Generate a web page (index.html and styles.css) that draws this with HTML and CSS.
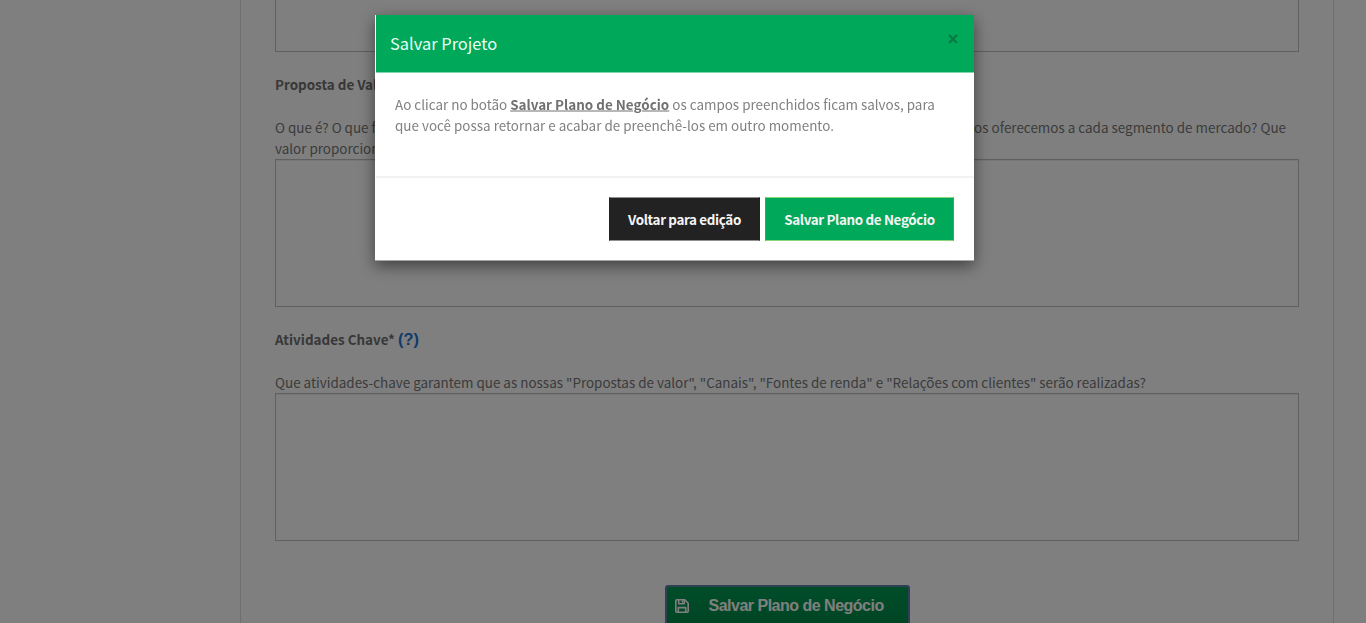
FILE: index.html
```
<!DOCTYPE html>
<html lang="pt-BR">
<head>
<meta charset="utf-8">
<title>Salvar Projeto</title>
<link rel="stylesheet" href="styles.css">
</head>
<body>
<main class="panel">
  <div class="field field-first"></div>
  <h4 class="label">Proposta de Valor*</h4>
  <p class="hint hint-two">
    <span class="hint-line"><span>O que é? O que fazemos?</span><span>Que produtos diferenciados oferecemos a cada segmento de mercado? Que</span></span>
    <span class="hint-line">valor proporcionamos?</span>
  </p>
  <div class="field"></div>
  <h4 class="label">Atividades Chave* <a class="help">(?)</a></h4>
  <p class="hint">Que atividades-chave garantem que as nossas "Propostas de valor", "Canais", "Fontes de renda" e "Relações com clientes" serão realizadas?</p>
  <div class="field"></div>
  <button class="save">
    <svg class="disk" viewBox="0 0 14 14" width="14" height="14" fill="none" stroke="currentColor" stroke-width="1.6" stroke-linejoin="round"><path d="M1.7.8h8.1l3.4 3.4v8.1q0 .9-.9.9H1.7q-.9 0-.9-.9V1.7q0-.9.9-.9z"/><path d="M3.7.8v4h5.6v-4M3.3 13V8.6h7.4V13"/><path d="M7.5 1.2v2.5"/></svg>
    <span>Salvar Plano de Negócio</span>
  </button>
</main>
<div class="backdrop">
  <section class="modal">
    <header class="modal-header">
      <h3 class="title">Salvar Projeto</h3>
      <svg class="close" viewBox="0 0 10 10" width="10" height="10"><path d="M1 1l8 8M9 1l-8 8" stroke="currentColor" stroke-width="2.3"/></svg>
    </header>
    <div class="modal-body"><p class="message">Ao clicar no botão <b>Salvar Plano de Negócio</b> os campos preenchidos ficam salvos, para<br>que você possa retornar e acabar de preenchê-los em outro momento.</p></div>
    <footer class="modal-footer">
      <button class="btn btn-dark"><span>Voltar para edição</span></button>
      <button class="btn btn-green"><span>Salvar Plano de Negócio</span></button>
    </footer>
  </section>
</div>
</body>
</html>
```
FILE: styles.css
```
* { box-sizing: border-box; }
body {
  margin: 0;
  height: 623px;
  overflow: hidden;
  background: #fff;
  color: #777;
  font: 13.44px/21px "Noto Sans CJK SC", "Open Sans", sans-serif;
}
.panel {
  width: 1094px;
  height: 623px;
  margin-left: 240px;
  padding: 0 34px;
  border: solid #dfdfdf;
  border-width: 0 1px;
  overflow: hidden;
}
.field {
  width: 1024px;
  height: 148px;
  border: 1px solid #c0c0c0;
  box-shadow: inset 0 1px 1px rgba(0, 0, 0, .075);
}
.field-first { height: 52px; border-top: 0; box-shadow: none; }
.label { margin: 22px 0; height: 21px; font-size: 13.45px; font-weight: 700; color: #707070; white-space: nowrap; }
.help { color: #2277d4; font: bold 16.4px/21px "Liberation Sans", sans-serif; }
.hint { margin: 0; height: 21px; white-space: nowrap; }
.hint-two { height: 42px; }
.hint-line { display: flex; justify-content: space-between; width: 1011px; height: 21px; }
.save {
  display: flex;
  align-items: center;
  width: 245px;
  height: 42px;
  margin: 44px auto 0;
  padding: 0 8px;
  gap: 20px;
  border: 2px solid #6080a8;
  border-radius: 3px;
  background: linear-gradient(#009a52, #008a48);
  color: #fff;
  font: bold 16px/20px "Liberation Sans", sans-serif;
  letter-spacing: -.5px;
  white-space: nowrap;
}
.disk { flex: none; }
.backdrop { position: fixed; inset: 0; background: rgba(0, 0, 0, .5); }
.modal {
  width: 599px;
  height: 246px;
  margin: 15px 0 0 375px;
  background: #fff;
  border-bottom: 1px solid #a8a8a8;
  box-shadow: 0 5px 15px rgba(0, 0, 0, .5);
}
.modal-header {
  display: flex;
  justify-content: space-between;
  height: 58px;
  margin-left: 1px;
  padding: 14px 16px 0 14px;
  background: #00a859;
  border-bottom: 1px solid #80d4ac;
}
.title { margin: 0; color: #e8fff3; font-size: 16.45px; line-height: 28px; font-weight: 400; }
.close { margin-top: 5px; color: #0b7a47; }
.modal-body { height: 103px; padding: 21px 20px; color: #808080; white-space: nowrap; }
.message { margin: 0; transform: translateY(-.5px); }
.modal-body b { color: #707070; text-decoration: underline; }
.modal-footer {
  display: flex;
  justify-content: flex-end;
  gap: 5px;
  height: 84px;
  margin-left: 1px;
  padding: 19px 20px 0 0;
  border-top: 2px solid #f2f2f2;
}
.btn {
  height: 44px;
  padding: 0;
  border: 1px solid #222;
  border-top-color: #909090;
  border-bottom-color: #909090;
  color: #f4f4f4;
  font: 700 13.42px/21px "Noto Sans CJK SC", "Open Sans", sans-serif;
  letter-spacing: -.35px;
  white-space: nowrap;
}
.btn-dark { width: 151px; background: #222; }
.btn-green { width: 189px; background: #00a859; border-color: #8bd67c #2db443; }
```
